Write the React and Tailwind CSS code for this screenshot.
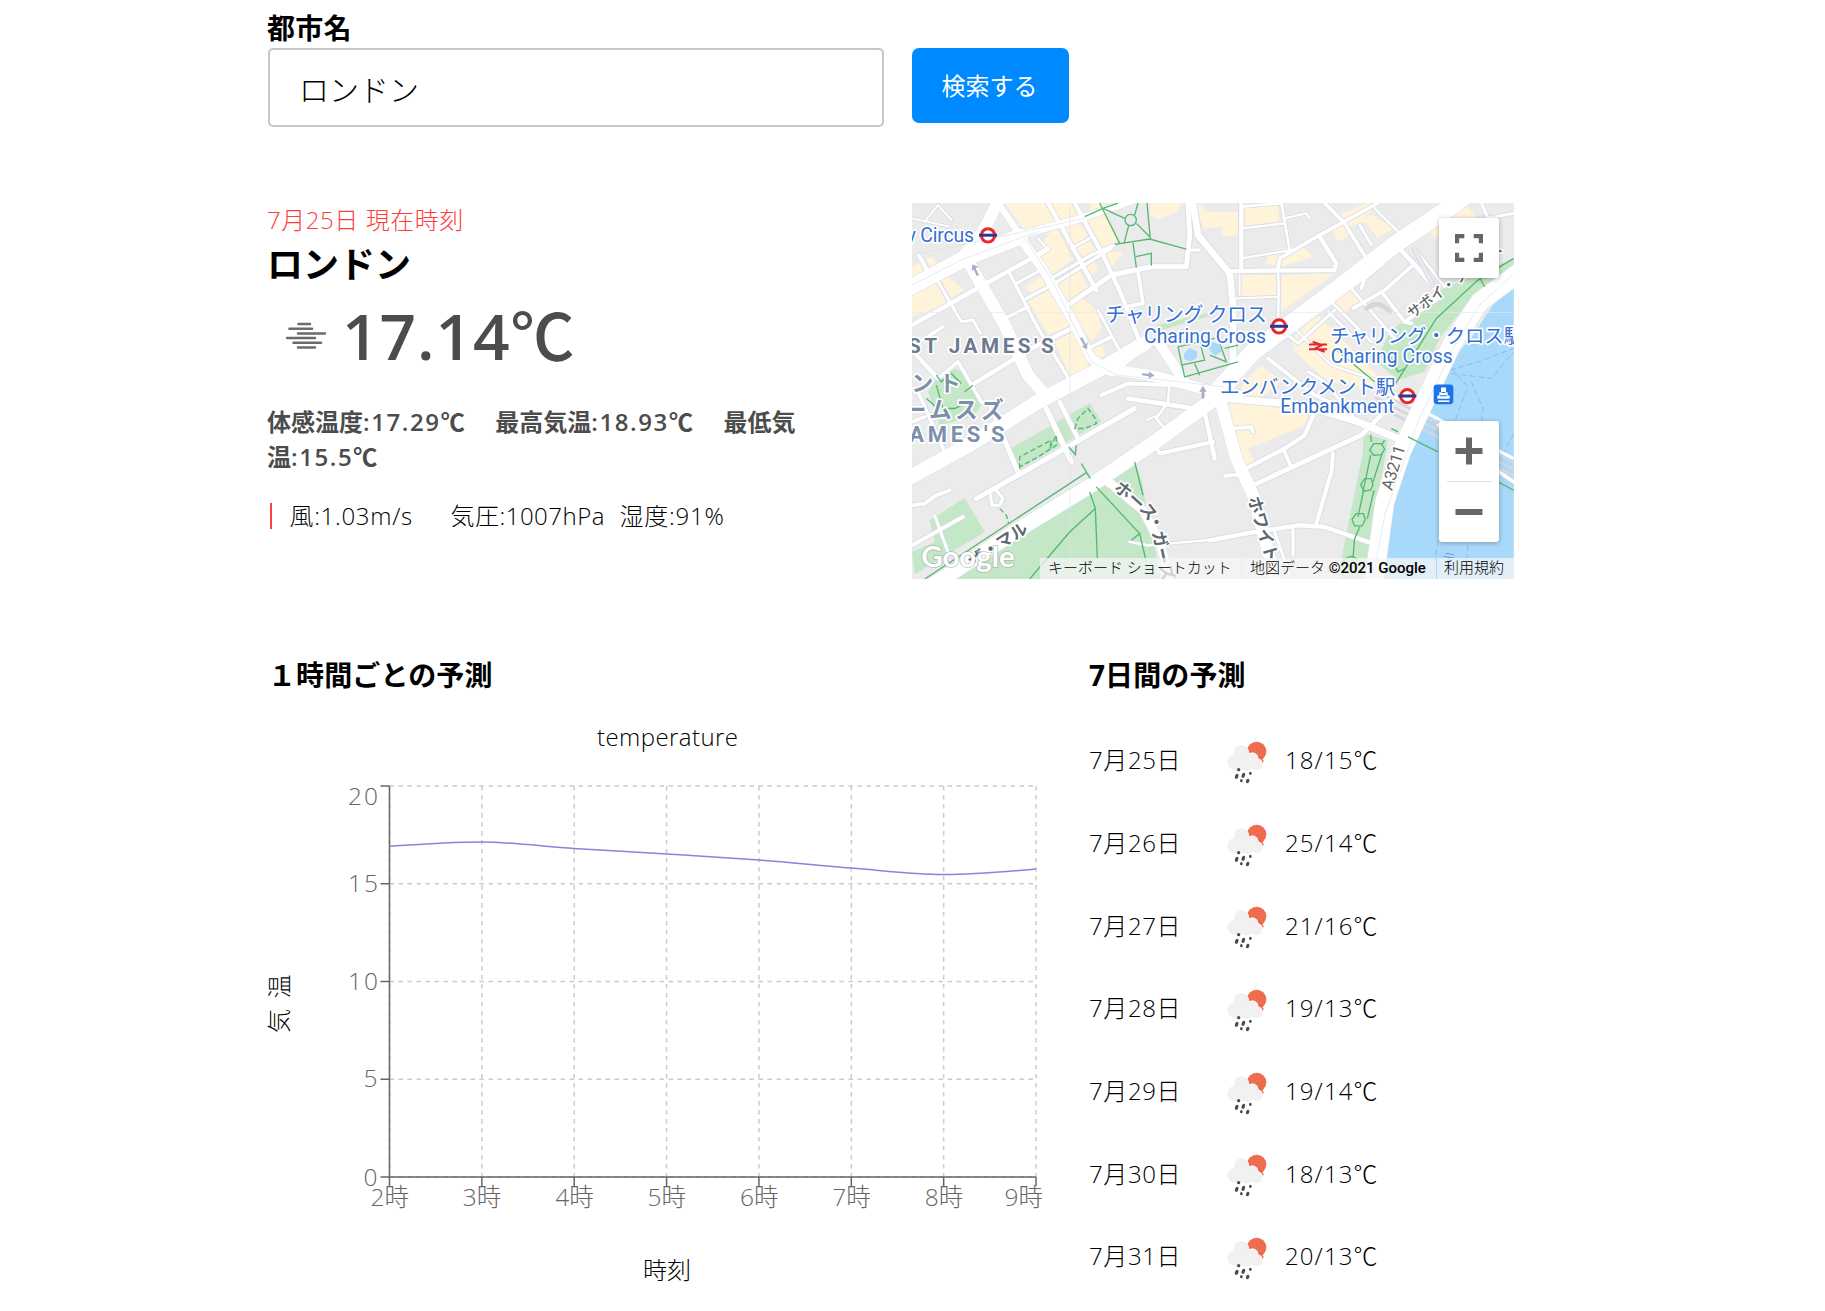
import React from "react";

const FONT = "font-['Open_Sans','Noto_Sans_CJK_JP',sans-serif]";

const CREAM = [
  "235,24 520,24 535,62 360,105 300,24",
  "560,24 600,24 612,70 638,140 590,165 545,75",
  "735,24 830,24 815,52 760,72 735,60",
  "22,215 50,200 70,235 22,258",
  "65,190 85,185 95,205 75,215",
  "22,300 95,260 125,325 22,365",
  "110,255 130,245 180,285 140,310",
  "395,175 440,105 460,105 505,195 440,240",
  "470,100 520,85 550,120 500,160",
  "505,165 555,135 580,180 530,205",
  "445,260 520,215 550,280 495,320",
  "535,215 570,200 580,225 555,242",
  "360,275 410,245 425,275 385,300",
  "370,320 435,285 500,390 430,420",
  "495,335 535,310 580,350 590,400 560,440",
  "450,440 505,410 555,515 495,545",
  "590,170 620,165 655,175 620,215",
  "565,460 595,450 600,480 575,490",
  "880,24 910,50 915,95 895,95 875,40",
  "895,50 1000,50 1000,120 955,125 950,95 895,100",
  "1020,35 1120,28 1125,90 1020,98",
  "1080,205 1105,165 1190,150 1225,185 1130,215",
  "1130,240 1290,235 1130,350",
  "1010,240 1115,240 1115,300 1010,305",
  "1300,60 1390,24 1420,24 1370,80 1310,105",
  "1280,100 1310,75 1335,120 1300,140",
  "1345,90 1400,60 1470,100 1420,130 1380,80",
  "1560,90 1680,24 1715,65 1590,130",
  "1290,310 1330,275 1370,320 1300,365",
  "1160,430 1240,360 1330,450 1420,540 1400,580 1270,560 1170,470",
  "1020,560 1070,510 1130,560 1070,610 1215,640 1200,690 1030,760 1050,800 990,830 970,640",
];

const PARKS = [
  "1415,500 1455,410 1515,365 1595,290 1827,190 1827,220 1715,290 1605,430 1560,530 1480,555",
  "1375,715 1450,735 1400,1020 1375,1151 1300,1151 1320,1040 1375,770",
  "150,1151 540,900 560,880 600,855 690,795 712,860 730,970 770,1151",
  "75,975 180,908 240,1010 30,1137 22,1070 90,1040",
  "318,760 555,624 590,680 345,822",
  "70,590 100,545 150,520 180,535 230,630 205,665 105,690",
  "760,390 925,350 925,360 770,405",
];

const MINOR = [
  ["22,70 135,95", 5], ["60,80 100,30 140,75", 6], ["22,390 200,290 380,190 430,160", 13],
  ["42,180 70,230", 12], ["95,250 170,380 205,375 228,415", 9], ["22,455 115,395", 10],
  ["315,235 395,390 495,555", 10], ["335,265 400,230", 9], ["365,310 450,265 620,160", 10],
  ["300,370 370,335", 10], ["22,465 95,545", 13], ["200,570 380,460 500,400", 13],
  ["430,24 470,95 575,285", 13], ["510,24 600,190 655,310 705,440", 13],
  ["400,130 430,165 400,185", 7], ["440,250 560,180 630,150", 10], ["490,330 620,240 740,215 845,215 855,120 850,24", 15],
  ["700,230 715,325 665,335", 11], ["580,345 650,475", 9], ["550,460 620,425", 11],
  ["500,160 555,130", 8], ["640,520 720,450 760,435", 18],
  ["865,24 880,120 975,235 985,330 985,540", 20], ["855,165 885,165", 9],
  ["1010,24 1010,220", 13], ["1010,100 1140,85", 7], ["1010,190 1160,165", 7], ["1010,35 1130,25 1155,165", 8],
  ["975,228 1290,225 1295,205 1245,125", 13], ["1120,220 1125,190 1245,120 1420,24", 11],
  ["1120,220 1122,280 1120,390", 8], ["1140,70 1205,55 1215,70", 7], ["1260,24 1320,85 1385,190", 11],
  ["1365,90 1400,150", 8], ["1410,40 1480,110", 7], ["985,310 1120,305", 6], ["1005,240 1005,300", 6],
  ["1475,150 1540,220 1600,290", 14], ["1370,280 1380,250 1435,205", 11], ["1345,340 1440,285 1520,215", 11],
  ["1430,290 1500,380 1520,385", 11], ["1530,160 1600,250 1620,275", 8], ["1500,380 1600,310", 11],
  ["1340,280 1470,430", 9], ["1280,320 1400,440", 9], ["1150,420 1180,445 1290,345", 9], ["1270,350 1340,420", 8],
  ["1730,24 1750,70 1827,55", 9], ["1170,400 1280,510 1430,560", 7], ["1090,490 1230,600 1340,650", 11],
  ["1210,530 1260,560 1350,670", 9], ["970,610 1200,630 1360,680 1480,730", 22],
  ["1005,830 1140,760 1200,720 1230,650", 13], ["960,842 1000,838", 11], ["1135,760 1160,815", 11],
  ["1045,870 1370,720 1430,660", 14], ["1285,775 1280,830 1235,985", 12],
  ["915,1035 1050,1010 1180,990 1260,995 1390,1040", 13], ["1110,1010 1160,1151", 9], ["1165,1000 1165,1080", 9],
  ["985,700 1040,695 1045,710", 11], ["920,750 930,790", 10], ["520,905 545,890", 8],
  ["260,640 340,830", 15], ["425,640 500,800", 16], ["465,620 520,730", 14], ["215,910 340,840 690,640", 15],
  ["22,930 60,925 95,900 135,885", 11], ["255,885 262,930 285,930 295,910 275,885", 9],
  ["100,550 160,500 230,620", 11], ["40,590 120,770", 11], ["22,680 60,665", 10],
  ["590,600 670,565 820,570", 12], ["670,610 870,640 890,640", 14], ["795,570 790,620 755,670 780,700", 8],
  ["725,675 760,660", 6], ["750,750 765,775 925,740", 12], ["900,650 930,790", 13],
  ["22,1050 175,965", 11], ["90,960 130,1070", 8], ["675,1040 730,1050 960,1030", 7],
  ["1680,770 1720,780 1740,800", 6], ["1600,690 1680,760 1827,860", 9],
];

const MAJOR = [
  ["280,20 235,110 180,180", 36], ["280,24 350,125", 18],
  ["0,285 180,190 345,125", 48], ["345,120 530,70 700,10", 22],
  ["185,190 300,390 370,540 430,610", 36], ["345,125 420,230 500,370 560,490 620,530", 28],
  ["600,520 760,545 930,590 1000,600", 32],
  ["760,440 800,500 840,560", 30],
  ["0,855 200,745 400,620 600,515 720,445", 44],
  ["60,1185 330,1010 560,870 780,720 930,610 975,560", 44],
  ["935,590 1045,470 1300,280 1475,145 1640,35 1710,-20", 52],
  ["940,590 995,790 1045,900 1120,1180", 36],
  ["600,850 715,945 765,1040 800,1160", 26],
  ["1860,220 1725,320 1640,450 1550,640 1490,770 1440,920 1405,1180", 56],
];

const PATHS = [
  "540,65 595,40 640,24", "585,24 645,145", "700,24 690,60", "727,24 737,132", "595,40 660,70",
  "695,85 735,125", "672,92 658,145", "630,148 735,132 845,162", "685,143 695,218", "693,185 740,175 740,212",
  "820,455 840,545 1000,500", "820,455 930,430", "885,440 900,495 830,510", "870,505 885,540", "915,480 965,500 940,430",
  "1000,450 960,460", "60,1151 545,832", "530,805 557,850", "555,890 572,940 578,1090", "572,940 495,1010 375,1151",
  "575,875 705,1015 680,1035", "690,800 715,900", "705,1015 725,1100", "1827,190 1720,255 1595,370 1470,570",
  "1715,230 1740,275", "1290,460 1410,560", "1450,470 1480,530 1500,520", "1398,718 1400,740 M1440,735 1430,750",
  "1375,890 1398,780", "1405,860 1432,775", "1360,965 1377,885", "1388,970 1408,885", "1345,1085 1350,1030 1365,995",
  "1460,700 1480,710", "1510,725 1600,770", "1780,860 1827,885", "95,540 110,560 140,535 170,565 M65,610 100,640 150,640 190,620",
  "180,590 205,570", "115,640 95,570",
];

const ptsToPath = (p) => p.split("M").map((s) => "M" + s.trim().split(" ").join(" L")).join(" ");

function Roundel({ x, y }) {
  return (
    <g>
      <circle cx={x} cy={y} r="20" fill="#fff" stroke="#e8282c" strokeWidth="9" />
      <rect x={x - 27} y={y - 5} width="54" height="9" fill="#2b3a8f" />
    </g>
  );
}

function Label({ x, y, size, len, color = "#3470d0", anchor, weight = 400, rotate, children, halo = 10 }) {
  return (
    <text
      x={x} y={y} fontSize={size} textLength={len} fill={color} textAnchor={anchor} fontWeight={weight}
      stroke="#fff" strokeWidth={halo} strokeLinejoin="round" paintOrder="stroke"
      transform={rotate ? `rotate(${rotate} ${x} ${y})` : undefined}
      className="font-[Roboto,'Noto_Sans_CJK_JP',sans-serif]"
    >
      {children}
    </text>
  );
}

function MapDrawing() {
  return (
    <svg viewBox="22 24 1806 1127" preserveAspectRatio="none" className="block h-full w-full">
      <rect x="0" y="0" width="1850" height="1180" fill="#ebebec" />
      {CREAM.map((p) => <polygon key={p} points={p} fill="#fff3d9" />)}
      {PARKS.map((p) => <polygon key={p} points={p} fill="#c4e7c7" />)}
      <polygon
        points="1827,275 1765,330 1705,420 1655,480 1635,520 1595,585 1545,650 1515,730 1475,870 1445,1010 1420,1151 1827,1151"
        fill="#a8d9fb"
      />
      <g fill="none" stroke="#84b4ea" strokeWidth="2.5" strokeDasharray="18 9">
        <path d="M1635,525 L1720,500 L1827,460" /><path d="M1640,535 L1760,550 L1827,470" />
        <path d="M1640,520 L1690,575 L1650,680" /><path d="M1700,560 L1735,640 L1730,680" />
        <path d="M1827,715 L1790,790" /><path d="M1600,1035 L1590,1100" /><path d="M1690,1050 L1680,1151" />
      </g>
      <g stroke="#d3d7dc" strokeWidth="8">
        <path d="M1420,590 L1827,800" /><path d="M1410,606 L1827,822" /><path d="M1400,622 L1827,842" />
      </g>
      <path d="M1440,590 L1560,650 L1827,790" stroke="#fff" strokeWidth="9" fill="none" />
      <g fill="none" strokeLinecap="round" strokeLinejoin="round">
        {MINOR.map(([p, w]) => <polyline key={p} points={p} stroke="#d8dce5" strokeWidth={w + 5} />)}
        {MAJOR.map(([p, w]) => <polyline key={p} points={p} stroke="#dfe3ea" strokeWidth={w + 4} />)}
        {MINOR.map(([p, w]) => <polyline key={p} points={p} stroke="#fff" strokeWidth={w} />)}
        {MAJOR.map(([p, w]) => <polyline key={p} points={p} stroke="#fff" strokeWidth={w} />)}
        <polyline points="1530,165 1585,270" stroke="#d9dce3" strokeWidth="16" />
        <polyline points="1530,165 1585,270" stroke="#e9eaee" strokeWidth="10" />
        <path d="M1385,340 Q1420,310 1455,350" stroke="#d5d6d9" strokeWidth="14" />
      </g>
      <g fill="none" stroke="#dbe3ea" strokeWidth="2">
        <path d="M22,180 L170,150 L540,70" /><path d="M22,270 L180,190 L400,110" /><path d="M360,130 L440,250 L560,500 L640,540 L960,575" />
        <path d="M1827,235 L1725,330 L1640,470 L1540,680 L1440,960 L1405,1151" /><path d="M496,24 V1151" stroke="#e4e4e4" /><path d="M22,352 H1827" stroke="#e8e8e8" />
      </g>
      <g fill="none" stroke="#54b874" strokeWidth="4">
        {PATHS.map((p) => <path key={p} d={ptsToPath(p)} />)}
        <circle cx="678" cy="75" r="17" />
        <polygon points="1395,765 1407,745 1430,745 1440,762 1430,778 1407,780" />
        <polygon points="1368,868 1380,850 1400,850 1405,868 1398,884 1378,888" />
        <polygon points="1342,973 1354,955 1376,955 1382,972 1372,992 1350,992" />
        <path d="M1315,1100 Q1335,1070 1360,1095" />
        <g strokeDasharray="16 8">
          <path d="M345,820 V785 L440,735 L435,760 L455,720 V750 L400,785 L345,815" />
          <path d="M510,700 L520,670 L550,640 L572,670 L575,685 L540,700 Z" />
          <path d="M285,940 L305,960 L312,985" />
        </g>
        <path d="M492,755 L512,778 L515,750" />
      </g>
      <polygon points="838,475 855,458 878,470 875,490 855,500 838,490" fill="#a8d9fb" />
      <polygon points="912,460 925,440 948,450 950,470 930,482" fill="#a8d9fb" />
      <g fill="#a9adc8">
        <path d="M203,208 L221,215 L213,220 L223,240 L216,243 L207,223 L201,228Z" />
        <path d="M547,462 L531,455 L538,450 L526,430 L533,426 L543,447 L549,440Z" />
        <path d="M750,541 L732,550 V543 L712,540 V534 L733,536 L732,528Z" />
        <path d="M895,572 L906,590 H899 V610 H891 V590 H884Z" />
      </g>

      <Label x={6} y={140} size={58} len={202}>y Circus</Label>
      <Roundel x={250} y={121} />
      <Label x={602} y={382} size={60} len={484}>チャリング クロス</Label>
      <Label x={718} y={444} size={58} len={366}>Charing Cross</Label>
      <Roundel x={1123} y={394} />
      <Label x={1276} y={445} size={58}>チャリング・クロス駅</Label>
      <Label x={1278} y={504} size={58} len={366}>Charing Cross</Label>
      <path d="M1213,448 h54 M1213,462 h54 M1260,470 l-28,-10 l20,-10 l-28,-10" stroke="#e8282c" strokeWidth="6" fill="none" />
      <Label x={946} y={596} size={59} len={526}>エンバンクメント駅</Label>
      <Label x={1127} y={653} size={58} len={342}>Embankment</Label>
      <Roundel x={1508} y={603} />
      <rect x="1587" y="568" width="59" height="59" rx="10" fill="#1a73e8" />
      <path d="M1600,618 h34" stroke="#fff" strokeWidth="5" />
      <path d="M1598,611 v-10 h6 v-10 h5 v-14 h15 v14 h5 v10 h6 v10z" fill="#fff" />
      <path d="M1611,592 h11 M1606,602 h21" stroke="#1a73e8" strokeWidth="3" />

      <Label x={10} y={474} size={62} len={437} weight={700} color="#6b7a8c">ST JAMES&#39;S</Label>
      <Label x={20} y={589} size={66} len={148} weight={700} color="#7d90ab">ント</Label>
      <Label x={-3} y={667} size={68} len={300} weight={700} color="#7d90ab">ームスズ</Label>
      <Label x={14} y={740} size={66} len={286} weight={700} color="#7d90ab">AMES&#39;S</Label>
      <Label x={1522} y={372} size={43} rotate={-37} color="#666" weight={500}>サボイ・プレイス</Label>
      <Label x={205} y={1117} size={50} rotate={-33} color="#5d6872" weight={700}>ザ・マル</Label>
      <g fill="#5d6872" stroke="#fff" strokeWidth="9" paintOrder="stroke" fontSize="50" fontWeight="700" textAnchor="middle" className="font-['Noto_Sans_CJK_JP',sans-serif]">
        <text transform="translate(645 898) rotate(38)">ホ</text>
        <text transform="translate(683 930) rotate(42)">ー</text>
        <text transform="translate(718 960) rotate(52)">ス</text>
        <text transform="translate(738 988) rotate(65)">・</text>
        <text transform="translate(748 1036) rotate(76)">ガ</text>
        <text transform="translate(757 1085) rotate(78)">ー</text>
        <text transform="translate(770 1135) rotate(78)">ズ</text>
      </g>
      <Label x={1029} y={910} size={50} rotate={73} len={200} color="#5d6872" weight={700}>ホワイト</Label>
      <Label x={1462} y={888} size={50} rotate={-73} len={138} color="#666">A3211</Label>
      <Label x={1610} y={1100} size={40} rotate={10} color="#6d9be0" halo={0}>テ</Label>
      <text x="50" y="1116" fontSize="88" textLength="280" fill="#fff" stroke="#8c968f" strokeWidth="5" strokeOpacity=".55" paintOrder="stroke" fontWeight="700" className="font-[Lato,sans-serif]">Google</text>
    </svg>
  );
}

function MapPanel() {
  return (
    <div className="relative h-[376px] w-[602px] overflow-hidden bg-[#ebebec]">
      <MapDrawing />
      <button className="absolute left-[527px] top-[15px] grid h-[60px] w-[60px] place-items-center rounded-[3px] bg-white shadow-[0_1px_5px_rgba(0,0,0,0.3)]">
        <svg width="28" height="28" viewBox="0 0 27 27" fill="none" stroke="#666" strokeWidth="4">
          <path d="M2,9 V2 H9 M18,2 H25 V9 M25,18 V25 H18 M9,25 H2 V18" />
        </svg>
      </button>
      <div className="absolute left-[527px] top-[218px] flex h-[121px] w-[60px] flex-col items-center rounded-[3px] bg-white shadow-[0_1px_5px_rgba(0,0,0,0.3)]">
        <button className="grid h-[60px] w-full place-items-center">
          <svg width="28" height="28" viewBox="0 0 28 28" stroke="#666" strokeWidth="6"><path d="M0.5,14 H27.5 M14,0.5 V27.5" /></svg>
        </button>
        <div className="h-px w-[45px] bg-[#e0e0e0]" />
        <button className="grid h-[60px] w-full place-items-center">
          <svg width="28" height="28" viewBox="0 0 28 28" stroke="#666" strokeWidth="6"><path d="M0.5,14 H27.5" /></svg>
        </button>
      </div>
      <div className="absolute bottom-0 right-0 flex h-[21px] gap-px font-[Roboto,'Noto_Sans_CJK_JP',sans-serif] text-[15px] font-light leading-[21px] text-black">
        <div className="w-[201px] whitespace-nowrap bg-[#f5f5f5]/75 pl-[8px]">キーボード ショートカット</div>
        <div className="w-[194px] whitespace-nowrap bg-[#f5f5f5]/75 pl-[8px]">地図データ <span className="font-medium">©2021 Google</span></div>
        <div className="w-[77px] whitespace-nowrap bg-[#f5f5f5]/75 pl-[7px]">利用規約</div>
      </div>
    </div>
  );
}

function MistIcon() {
  return (
    <svg width="40" height="28" viewBox="0 0 40 28" stroke="#6b6b6b" strokeWidth="2.5" strokeLinecap="round">
      <path d="M12.5,2 H24 M3.5,6.7 H26 M12,11.4 H39 M1,16 H29 M7.5,20.7 H35 M12,25.4 H29" />
    </svg>
  );
}

function RainIcon() {
  return (
    <svg width="40" height="43" viewBox="0 0 120 129" className="relative -left-px top-[2px]">
      <circle cx="89" cy="31" r="29" fill="#ef6c4f" />
      <path d="M62,28 Q70,40 76,36 Q90,36 93,48 Q106,54 108,64" fill="none" stroke="#ea5a3a" strokeWidth="5" />
      <g fill="#f1f1f2">
        <circle cx="24" cy="64" r="23" /><circle cx="44" cy="36" r="23" /><circle cx="76" cy="53" r="19" />
        <circle cx="90" cy="69" r="18" /><circle cx="58" cy="62" r="27" /><circle cx="42" cy="68" r="18" />
      </g>
      <g fill="#4c4c50">
        <ellipse cx="35" cy="86" rx="5" ry="5" /><ellipse cx="70" cy="97" rx="4" ry="5" />
        <ellipse cx="29" cy="106" rx="5" ry="8" transform="rotate(20 29 106)" /><ellipse cx="49" cy="103" rx="5" ry="8" transform="rotate(20 49 103)" />
        <ellipse cx="43" cy="119" rx="4" ry="5" /><ellipse cx="62" cy="120" rx="5" ry="7" transform="rotate(20 62 120)" />
      </g>
    </svg>
  );
}

const HOURS = [2, 3, 4, 5, 6, 7, 8, 9];
const TICKS = [[20, 805], [15, 892], [10, 990], [5, 1087], [0, 1186]];
const LINE_Y = [846.3, 842, 848.5, 854, 860, 868, 874.5, 869];

function curve() {
  const dx = 92.36;
  const m = LINE_Y.map((y, i) => {
    if (i === 0 || i === LINE_Y.length - 1) return null;
    const a = y - LINE_Y[i - 1];
    const b = LINE_Y[i + 1] - y;
    return a * b <= 0 ? 0 : (2 * a * b) / (a + b);
  });
  m[0] = (3 * (LINE_Y[1] - LINE_Y[0]) - m[1]) / 2;
  m[7] = (3 * (LINE_Y[7] - LINE_Y[6]) - m[6]) / 2;
  let d = `M389.5,${LINE_Y[0]}`;
  for (let i = 1; i < 8; i++) {
    const x = 389.5 + dx * i;
    d += ` C${x - (dx * 2) / 3},${LINE_Y[i - 1] + m[i - 1] / 3} ${x - dx / 3},${LINE_Y[i] - m[i] / 3} ${x},${LINE_Y[i]}`;
  }
  return d;
}

function Chart() {
  return (
    <svg width="785" height="600" viewBox="267 700 785 600" className="block">
      <g stroke="#ccc" strokeWidth="1.5" strokeDasharray="4.5 4.5">
        {[0, 1, 2, 3, 4].map((i) => <path key={i} d={`M389.5,${786 + 97.75 * i} H1036`} />)}
        {HOURS.map((h, i) => <path key={h} d={`M${389.5 + 92.36 * i},786 V1177`} />)}
      </g>
      <g stroke="#666" strokeWidth="1.5">
        <path d="M389.5,786 V1177 M389.5,1177 H1036" />
        {[0, 1, 2, 3, 4].map((i) => <path key={i} d={`M380.5,${786 + 97.75 * i} h9`} />)}
        {HOURS.map((h, i) => <path key={h} d={`M${389.5 + 92.36 * i},1177 v9`} />)}
      </g>
      <path d={curve()} fill="none" stroke="#8884d8" strokeWidth="1.5" />
      <g fill="#666" fontSize="24.5" fontWeight="300">
        {TICKS.map(([t, y]) => (
          <text key={t} x={t > 9 ? 348 : 377.5} y={y} textAnchor={t > 9 ? "start" : "end"} textLength={t > 9 ? 30 : undefined}>{t}</text>
        ))}
        {HOURS.map((h, i) => (
          <text key={h} x={(i === 7 ? 1023.5 : 389.5 + 92.36 * i) - 19} y="1206" textLength="38.5">{h}時</text>
        ))}
      </g>
      <g fontSize="24" fontWeight="300" fill="#000">
        <text x="597" y="746" textLength="141">temperature</text>
        <text x="643" y="1279">時刻</text>
        <text transform="translate(288 1033) rotate(-90)" letterSpacing="10.5">気温</text>
      </g>
    </svg>
  );
}

const DAYS = [
  ["7月25日", "18/15℃"], ["7月26日", "25/14℃"], ["7月27日", "21/16℃"], ["7月28日", "19/13℃"],
  ["7月29日", "19/14℃"], ["7月30日", "18/13℃"], ["7月31日", "20/13℃"],
];

function Reading({ label, value }) {
  return <>{label}<span className="tracking-[1.6px]">:{value}</span></>;
}

export default function App() {
  return (
    <div lang="ja" className={`h-[1311px] overflow-hidden bg-white pl-[267px] text-[24px] font-light text-black ${FONT}`}>
      <form className="flex h-[203px] items-start gap-[28px]" onSubmit={(e) => e.preventDefault()}>
        <div className="w-[617px] pt-[8px]">
          <label className="block h-[40px] text-[28px] font-bold leading-[40px] tracking-[0.3px]">都市名</label>
          <input
            defaultValue="ロンドン"
            className="ml-px block h-[79px] w-[616px] rounded-[5px] border-2 border-[#cfc3c3] bg-white pl-[29px] text-[30px] font-light outline-none"
          />
        </div>
        <button className="mt-[48px] h-[75px] w-[157px] rounded-[7px] bg-[#008aff] pr-[2px] text-[24px] font-normal text-white">検索する</button>
      </form>

      <section className="flex h-[438px]">
        <div className="w-[645px]">
          <div className="-mt-px h-[36px] leading-[36px] tracking-[0.55px] text-[#ff3b3b]">7月25日 現在時刻</div>
          <h1 className="h-[54px] text-[36px] font-bold leading-[54px]">ロンドン</h1>
          <div className="flex h-[88px] items-center pl-[19px] text-[#4c4c4c]">
            <MistIcon />
            <span className="ml-[16px] text-[64px] font-semibold leading-[88px] tracking-[0.9px]">17.14<span className="font-medium">℃</span></span>
          </div>
          <p className="mt-[24px] w-[560px] text-[24px] font-semibold leading-[35px] text-[#4c4c4c]">
            <Reading label="体感温度" value="17.29℃" /><span className="inline-block w-[29px]" /><Reading label="最高気温" value="18.93℃" /><span className="inline-block w-[29px]" /><Reading label="最低気温" value="15.5℃" />
          </p>
          <div className="mt-[29px] flex h-[26px] items-center leading-[26px]">
            <span className="ml-[3px] h-[26px] w-[1.5px] bg-[#ff4040]" />
            <span className="ml-[18px] w-[161px] tracking-[0.7px]">風:1.03m/s</span>
            <span className="w-[169px] tracking-[0.5px]">気圧:1007hPa</span>
            <span className="tracking-[0.8px]">湿度:91%</span>
          </div>
        </div>
        <MapPanel />
      </section>

      <section className="flex">
        <div className="w-[822px]">
          <h2 className="h-[59px] pl-px pt-[14px] text-[28px] font-bold leading-[40px] tracking-[0.1px]">１時間ごとの予測</h2>
          <Chart />
        </div>
        <div>
          <h2 className="h-[78px] pt-[14px] text-[28px] font-bold leading-[40px] tracking-[0.1px]">7日間の予測</h2>
          <ul>
            {DAYS.map(([day, temp]) => (
              <li key={day} className="flex h-[82.7px] items-center">
                <span className="w-[139px] tracking-[0.6px]">{day}</span>
                <RainIcon />
                <span className="ml-[17px] tracking-[1.1px]">{temp}</span>
              </li>
            ))}
          </ul>
        </div>
      </section>
    </div>
  );
}
